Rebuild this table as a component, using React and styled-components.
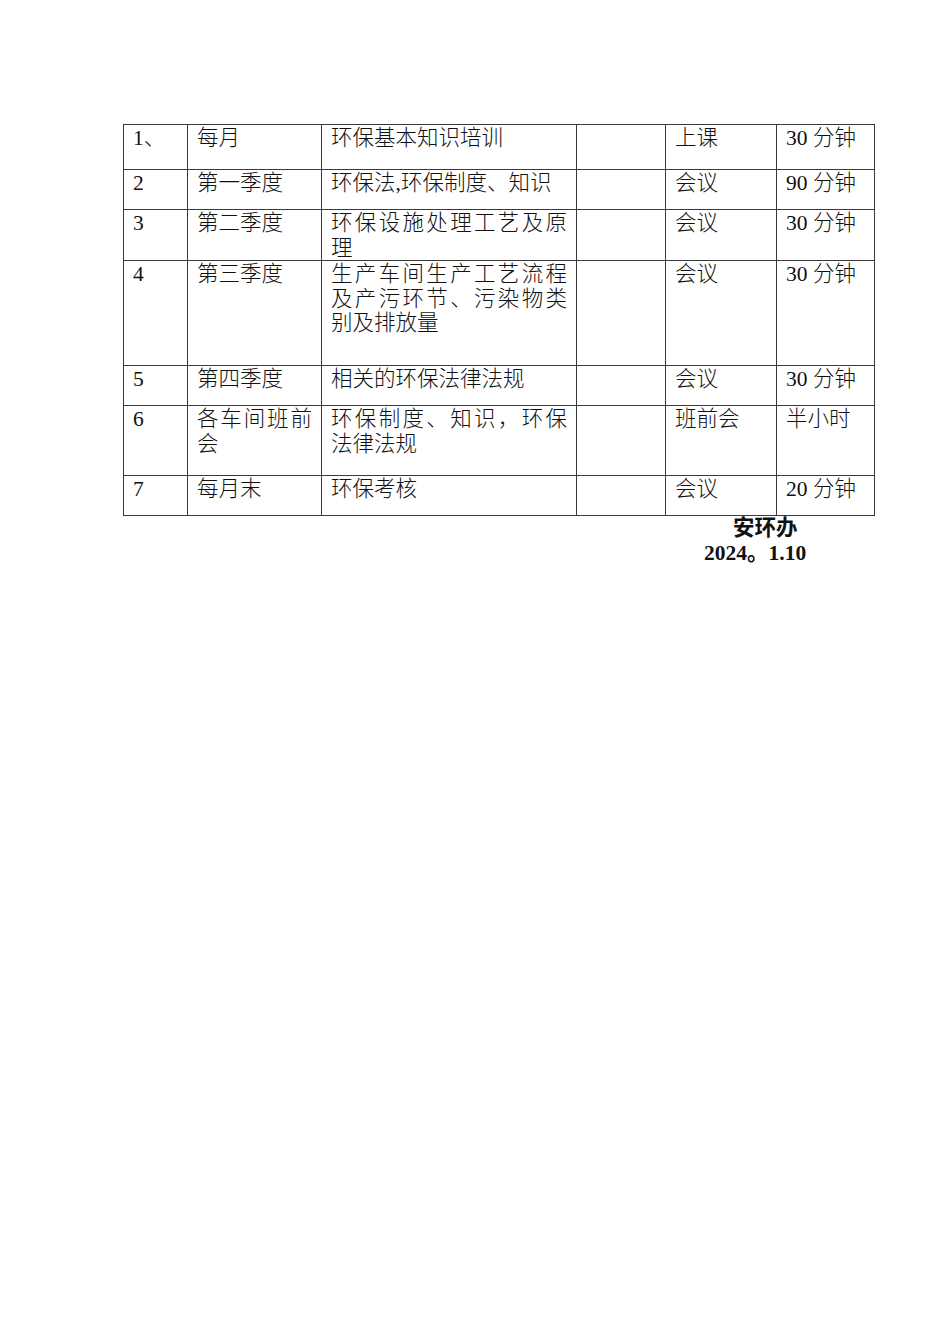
import styled, { createGlobalStyle } from "styled-components";

const GlobalStyle = createGlobalStyle`
  body {
    margin: 0;
    background: #ffffff;
    color: #111111;
    font-family: "Liberation Serif", "Noto Sans CJK SC", serif;
  }
`;

const Page = styled.div`
  width: 950px;
  min-height: 1344px;
  box-sizing: border-box;
  padding: 124px 0 0 123px;
`;

const Table = styled.table`
  width: 751px;
  border-collapse: collapse;
  table-layout: fixed;
  font-size: 21.5px;
  line-height: 24.5px;
`;

const Row = styled.tr`
  height: ${(p) => p.$h}px;
`;

const Cell = styled.td`
  border: 1px solid #3a3a3a;
  padding: 1px 9px 0 9px;
  vertical-align: top;
  text-align: justify;
  text-align-last: left;
  word-break: break-all;
  box-sizing: border-box;
  font-weight: 300;
`;

const Col = styled.col`
  width: ${(p) => p.$w}px;
`;

const Sign = styled.div`
  font-weight: bold;
  font-size: 21.5px;
  line-height: 25px;
  padding-top: 0;
`;

const SignLine = styled.div`
  padding-left: ${(p) => p.$indent}px;
`;

const rows = [
  { h: 45, no: "1、", when: "每月", what: "环保基本知识培训", how: "上课", time: "30 分钟" },
  { h: 40, no: "2", when: "第一季度", what: "环保法,环保制度、知识", how: "会议", time: "90 分钟" },
  { h: 50, no: "3", when: "第二季度", what: "环保设施处理工艺及原理", how: "会议", time: "30 分钟" },
  { h: 105, no: "4", when: "第三季度", what: "生产车间生产工艺流程及产污环节、污染物类别及排放量", how: "会议", time: "30 分钟" },
  { h: 40, no: "5", when: "第四季度", what: "相关的环保法律法规", how: "会议", time: "30 分钟" },
  { h: 70, no: "6", when: "各车间班前会", what: "环保制度、知识，环保法律法规", how: "班前会", time: "半小时" },
  { h: 40, no: "7", when: "每月末", what: "环保考核", how: "会议", time: "20 分钟" },
];

export default function App() {
  return (
    <>
      <GlobalStyle />
      <Page>
        <Table>
          <colgroup>
            <Col $w={64} />
            <Col $w={134} />
            <Col $w={255} />
            <Col $w={89} />
            <Col $w={111} />
            <Col $w={98} />
          </colgroup>
          <tbody>
            {rows.map((r) => (
              <Row key={r.no} $h={r.h}>
                <Cell>{r.no}</Cell>
                <Cell>{r.when}</Cell>
                <Cell>{r.what}</Cell>
                <Cell></Cell>
                <Cell>{r.how}</Cell>
                <Cell>{r.time}</Cell>
              </Row>
            ))}
          </tbody>
        </Table>
        <Sign>
          <SignLine $indent={610}>安环办</SignLine>
          <SignLine $indent={581}>2024。1.10</SignLine>
        </Sign>
      </Page>
    </>
  );
}
